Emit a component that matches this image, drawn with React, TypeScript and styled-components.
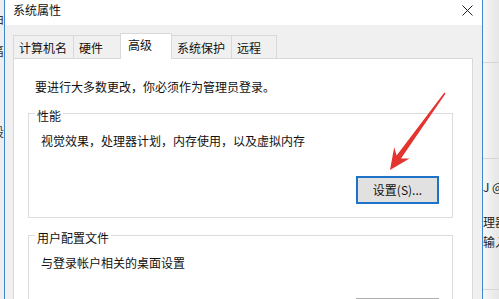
import React from "react";
import styled, { createGlobalStyle } from "styled-components";

const GlobalStyle = createGlobalStyle`
  html, body { margin: 0; padding: 0; background: #f0f0f0; overflow: hidden; }
  body {
    font-family: "Noto Sans CJK SC", "Microsoft YaHei", "Noto Sans", sans-serif;
    font-size: 12px;
    color: #111;
  }
  * { box-sizing: border-box; }
`;

const Screen = styled.div`
  position: relative;
  display: flex;
  width: 499px;
  height: 299px;
  overflow: hidden;
`;

const LeftWindow = styled.div`
  width: 4px;
  flex: none;
  background: #eeeeee;
  overflow: hidden;
  display: flex;
  flex-direction: column;
  align-items: flex-end;
`;

const Fragment = styled.span<{ $top: number }>`
  display: block;
  margin-top: ${(p) => p.$top}px;
  line-height: 14px;
  font-size: 12px;
  white-space: nowrap;
  color: #333;
`;

const Dialog = styled.div`
  width: 479px;
  flex: none;
  display: flex;
  flex-direction: column;
  border-left: 1px solid #3c86d2;
  border-right: 1px solid #3c86d2;
`;

const TitleBar = styled.div`
  height: 25px;
  flex: none;
  background: #ffffff;
  display: flex;
  align-items: flex-start;
  justify-content: space-between;
  padding: 2px 9px 0 8px;
`;

const Title = styled.span`
  line-height: 16px;
  color: #111;
`;

const CloseIcon = styled.svg`
  margin-top: 3px;
`;

const Body = styled.div`
  flex: 1;
  background: #f0f0f0;
  padding: 8px 9px 0 8px;
  display: flex;
  flex-direction: column;
`;

const TabRow = styled.div`
  display: flex;
  align-items: flex-end;
  height: 25px;
  flex: none;
`;

const Tab = styled.div<{ $w: number; $active?: boolean }>`
  width: ${(p) => p.$w}px;
  height: ${(p) => (p.$active ? 26 : 23)}px;
  margin-right: -1px;
  margin-bottom: ${(p) => (p.$active ? -1 : 0)}px;
  position: relative;
  z-index: ${(p) => (p.$active ? 2 : 1)};
  background: ${(p) => (p.$active ? "#ffffff" : "#f0f0f0")};
  border: 1px solid #d9d9d9;
  border-bottom: none;
  padding: ${(p) => (p.$active ? "3px 0 0 7px" : "4px 0 0 5px")};
  line-height: 16px;
  white-space: nowrap;
`;

const Panel = styled.div`
  flex: 1;
  background: #ffffff;
  border: 1px solid #d9d9d9;
  border-bottom: none;
  padding: 20px 0 0 21px;
  display: flex;
  flex-direction: column;
`;

const Intro = styled.div`
  line-height: 16px;
`;

const GroupBox = styled.div<{ $gap: number }>`
  margin: ${(p) => p.$gap}px 19px 0 -7px;
  border: 1px solid #dcdcdc;
  padding: 0 13px 13px 12px;
  display: flex;
  flex-direction: column;
  flex: none;
`;

const Legend = styled.span`
  align-self: flex-start;
  margin: -6px 0 0 -6px;
  padding: 0 2px;
  background: #ffffff;
  line-height: 16px;
`;

const GroupText = styled.div`
  margin-top: 9px;
  line-height: 16px;
`;

const Button = styled.button<{ $default?: boolean }>`
  align-self: flex-end;
  margin-top: 27px;
  width: 83px;
  height: 28px;
  background: #e1e1e1;
  border: ${(p) => (p.$default ? "2px solid #1e72c8" : "1px solid #adadad")};
  font-family: inherit;
  font-size: 12px;
  color: #111;
  padding: 0;
  line-height: 16px;
`;

const RightWindow = styled.div`
  flex: 1;
  background: linear-gradient(90deg, #f7f7f7 0%, #ececec 60%, #e6e6e6 100%);
  display: flex;
  flex-direction: column;
  overflow: hidden;
`;

const RuleLine = styled.div<{ $top: number }>`
  margin-top: ${(p) => p.$top}px;
  height: 1px;
  background: #d6d6d6;
  flex: none;
`;

const Clip = styled.span<{ $top: number }>`
  display: block;
  margin-top: ${(p) => p.$top}px;
  line-height: 14px;
  white-space: nowrap;
  color: #222;
  font-size: 12px;
`;

const ArrowLayer = styled.svg`
  position: absolute;
  left: 0;
  top: 0;
  pointer-events: none;
`;

export default function App() {
  const tabs = [
    { label: "计算机名", w: 61 },
    { label: "硬件", w: 48 },
    { label: "高级", w: 52, active: true },
    { label: "系统保护", w: 61 },
    { label: "远程", w: 46 },
  ];
  return (
    <>
      <GlobalStyle />
      <Screen>
        <LeftWindow>
          <Fragment $top={12}>由</Fragment>
          <Fragment $top={18}>畐</Fragment>
          <Fragment $top={67}>设</Fragment>
        </LeftWindow>
        <Dialog>
          <TitleBar>
            <Title>系统属性</Title>
            <CloseIcon width="11" height="11" viewBox="0 0 11 11">
              <path d="M0.5 0.5 L10.5 10.5 M10.5 0.5 L0.5 10.5" stroke="#222" strokeWidth="1" fill="none" />
            </CloseIcon>
          </TitleBar>
          <Body>
            <TabRow>
              {tabs.map((t) => (
                <Tab key={t.label} $w={t.w} $active={t.active}>
                  {t.label}
                </Tab>
              ))}
            </TabRow>
            <Panel>
              <Intro>要进行大多数更改，你必须作为管理员登录。</Intro>
              <GroupBox $gap={18}>
                <Legend>性能</Legend>
                <GroupText>视觉效果，处理器计划，内存使用，以及虚拟内存</GroupText>
                <Button $default>设置(S)...</Button>
              </GroupBox>
              <GroupBox $gap={17}>
                <Legend>用户配置文件</Legend>
                <GroupText>与登录帐户相关的桌面设置</GroupText>
                <Button>设置(E)...</Button>
              </GroupBox>
            </Panel>
          </Body>
        </Dialog>
        <RightWindow>
          <RuleLine $top={62} />
          <RuleLine $top={95} />
          <Clip $top={21}>J @</Clip>
          <Clip $top={21}>理器</Clip>
          <Clip $top={6}>输入</Clip>
          <RuleLine $top={40} />
        </RightWindow>
        <ArrowLayer width="499" height="299" viewBox="0 0 499 299">
          <polygon
            points="390,170 409.5,158.5 401,158.6 445.6,93.4 444.4,92.6 396.6,155.4 394.2,147.3"
            fill="#e5332f"
          />
        </ArrowLayer>
      </Screen>
    </>
  );
}
